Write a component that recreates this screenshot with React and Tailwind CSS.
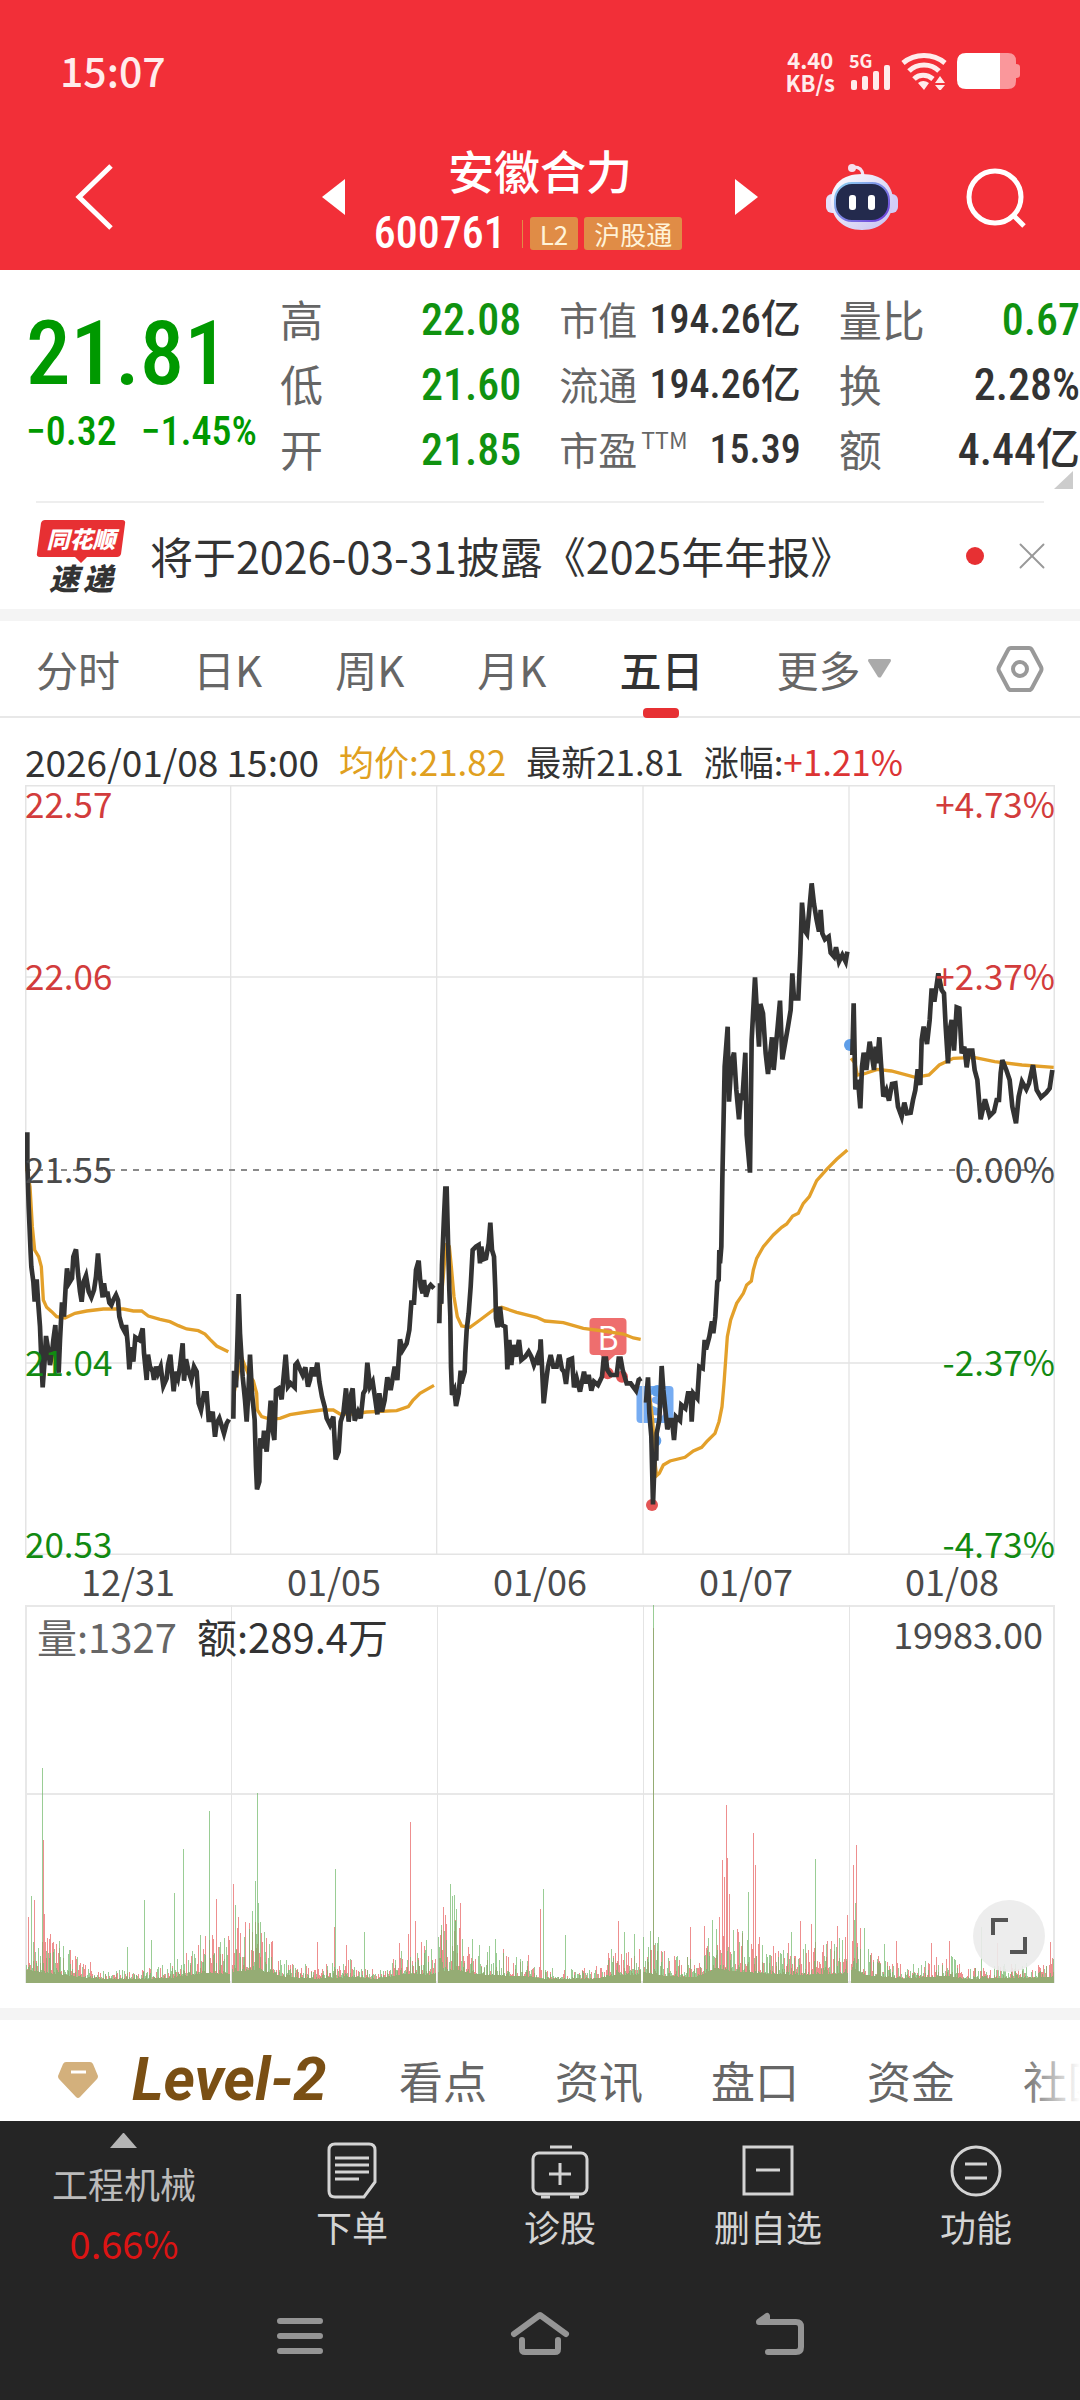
import { X } from "lucide-react"

const quotes = [
  { label: "高", value: "22.08", down: true },
  { label: "低", value: "21.60", down: true },
  { label: "开", value: "21.85", down: true },
  { label: "市值", value: "194.26亿", small: true },
  { label: "流通", value: "194.26亿", small: true },
  { label: "市盈", sup: "TTM", value: "15.39", small: true },
  { label: "量比", value: "0.67", down: true },
  { label: "换", value: "2.28%" },
  { label: "额", value: "4.44亿" },
]

const periods = ["分时", "日K", "周K", "月K", "五日"]

const leftScale = ["22.57", "22.06", "21.55", "21.04", "20.53"]
const rightScale = ["+4.73%", "+2.37%", "0.00%", "-2.37%", "-4.73%"]
const scaleTone = [
  "text-[#d23c3c]",
  "text-[#d23c3c]",
  "text-[#4a4a4a]",
  "text-[#128a12]",
  "text-[#128a12]",
]
const scalePlace = ["top-[-2px]", "top-[170px]", "top-[363px]", "top-[556px]", "bottom-[-8px]"]

const dates = ["12/31", "01/05", "01/06", "01/07", "01/08"]

// Each session holds two polylines, shifted by its own origin
const sessions = [
  {
    origin: "translate(-75 945)",
    price:
      "82,97 82,185 86,320 92,460 94,500 100,545 104,605 110,538 114,600 120,680 124,780 128,862 134,780 138,708 144,745 150,795 156,760 160,720 166,675 170,760 176,818 180,720 186,607 192,650 197,560 201,505 208,548 216,535 220,470 228,448 234,520 240,575 245,605 251,545 258,527 266,575 274,592 282,570 288,530 294,460 300,530 308,592 312,550 318,590 322,575 328,608 334,615 340,600 348,585 354,600 358,650 366,680 374,695 378,675 383,730 388,808 394,742 400,785 406,712 418,720 428,685 432,760 440,840 444,764 450,800 458,815 462,840 468,800 474,820 482,800 490,858 500,835 504,795 511,764 516,820 521,874 527,815 534,835 540,800 548,730 552,842 558,778 566,815 574,840 582,800 590,815 596,910 603,930 612,880 620,880 626,960 632,960 638,935 645,1010 650,970 658,955 666,980 672,1000 680,970 687,958",
    average:
      "75,185 82,215 90,260 97,380 104,450 116,470 124,500 130,600 140,622 155,635 170,650 195,654 225,640 260,633 310,627 370,627 400,633 425,633 445,648 480,658 510,665 535,677 560,687 595,692 615,702 630,718 650,738 685,755",
  },
  {
    origin: "translate(-75 945)",
    price:
      "700,956 702,812 708,862 713,700 716,582 720,700 728,830 735,900 740,965 745,880 750,764 756,880 764,960 768,1100 771,1168 778,1145 781,1015 788,1045 792,992 800,1055 806,980 812,902 818,990 823,1020 828,870 836,865 845,898 850,840 857,764 864,860 872,850 884,862 886,795 892,788 900,808 908,825 916,802 924,860 930,840 936,802 944,828 952,788 958,845 966,890 974,920 980,955 990,975 1000,950 1007,1078 1016,1055 1022,965 1030,940 1038,865 1046,965 1054,880 1058,865 1064,962 1074,935 1082,955 1090,880 1096,870 1102,788 1110,860 1118,845 1126,900 1132,943 1138,880 1146,935 1154,900 1162,832 1172,870 1184,800 1192,840 1200,718 1208,750 1220,730 1228,690 1234,608 1242,608 1248,510 1256,482 1262,560 1268,580 1272,540 1278,590 1286,562 1292,555 1302,565",
    average:
      "702,880 710,840 720,790 728,780 746,825 760,842 770,880 772,930 785,950 810,957 840,955 870,944 920,936 965,930 1000,930 1020,942 1060,942 1100,936 1190,932 1225,920 1238,902 1260,880 1302,856",
  },
  {
    origin: "translate(1185 945)",
    price:
      "58,670 60,550 64,612 66,495 72,350 76,266 80,266 84,420 88,570 91,650 93,800 96,885 103,870 108,918 116,880 122,812 124,850 134,815 136,760 140,690 146,640 152,560 158,450 168,440 176,435 180,490 184,440 190,478 198,475 206,430 211,368 216,450 222,470 226,570 228,655 233,682 240,620 246,675 256,680 260,750 262,808 268,720 274,795 280,735 288,770 297,720 304,780 316,770 326,755 334,770 342,795 352,770 358,795 362,718 366,800 371,910 380,830 384,800 392,765 400,800 410,800 418,764 426,808 432,815 438,852 446,780 456,776 462,862 470,835 480,875 492,815 498,850 506,825 514,872 522,845 534,855 546,830 551,776 558,776 562,810 572,825 590,825 596,776 602,776 608,810 620,850 632,850 648,872 656,840 664,835",
    average:
      "58,650 68,550 78,435 88,440 94,500 102,590 112,650 125,678 150,682 180,660 220,630 245,622 290,637 350,652 375,663 430,668 490,685 550,693 610,702 640,714 662,718",
  },
  {
    origin: "translate(1185 945)",
    price:
      "678,908 680,880 684,832 688,940 694,1010 699,1213 704,1075 709,1075 710,1000 718,960 722,870 725,798 730,870 736,930 742,988 750,960 756,960 762,1020 768,950 780,962 784,915 796,925 804,880 812,880 815,965 820,880 832,895 838,800 848,805 854,720 858,748 868,710 876,664 880,700 886,650 892,545 896,540 898,450 900,490 904,440 907,240 914,-100 923,-220 927,5 934,-110 942,-142 949,-30 957,58 963,-20 967,0 976,-142 980,105 990,218 995,-180 1005,-368 1011,-260 1017,-160 1021,-288 1029,-260 1037,-140 1044,-78 1056,-188 1061,-90 1073,-220 1080,-298 1087,-122 1097,-180 1104,-220 1112,-270 1117,-380 1122,-305 1135,-305 1141,-440 1146,-592 1153,-510 1161,-498 1167,-560 1175,-650 1182,-588 1190,-540 1197,-505 1202,-570 1207,-500 1215,-482 1226,-490 1232,-442 1242,-430 1248,-458 1257,-415 1267,-435 1277,-415 1282,-445",
    average:
      "688,880 698,960 704,1080 710,1127 718,1120 730,1095 750,1083 795,1072 820,1053 845,1042 860,1025 885,1000 897,965 906,920 912,850 917,780 922,710 932,660 950,610 970,580 980,555 994,543 1000,510 1010,475 1030,440 1060,405 1085,382 1100,372 1118,348 1135,340 1150,310 1168,290 1190,242 1220,208 1250,178 1282,150",
  },
  {
    origin: "translate(1185 945)",
    price:
      "1297,-135 1301,-290 1306,-32 1314,-60 1321,25 1326,-100 1331,-142 1339,-90 1349,-175 1356,-130 1362,-90 1367,-160 1371,-110 1378,-188 1383,-110 1390,-10 1399,-30 1407,2 1416,-48 1426,-50 1434,20 1445,50 1453,8 1461,40 1472,38 1479,0 1486,-30 1493,-92 1501,-45 1505,-180 1511,-220 1521,-168 1529,-240 1535,-335 1543,-295 1555,-380 1565,-330 1572,-320 1577,-220 1584,-110 1589,-210 1595,-240 1602,-148 1610,-278 1618,-275 1625,-140 1633,-160 1640,-98 1647,-148 1657,-148 1664,-90 1672,-60 1682,58 1695,-2 1709,48 1722,35 1730,0 1737,0 1742,-80 1747,-120 1759,-90 1769,-60 1777,20 1788,70 1796,-10 1806,-55 1819,-32 1827,-50 1839,-105 1850,-30 1863,-8 1879,-22 1889,-35 1897,-90",
    average:
      "1293,-125 1305,-110 1312,-75 1331,-78 1372,-92 1414,-87 1486,-68 1527,-75 1558,-105 1600,-125 1662,-128 1724,-115 1806,-105 1901,-98",
  },
]

const trades = [
  { x: 563, y: 820, side: "buy" },
  { x: 606, y: 830, side: "buy" },
  { x: 696, y: 1215, side: "buy" },
  { x: 712, y: 873, side: "sell" },
  { x: 706, y: 1022, side: "sell" },
  { x: 1290, y: -165, side: "sell" },
]

// [x, typical height] of the volume floor
const floor = [
  [0, 44], [17, 34], [50, 18], [80, 7], [115, 7], [150, 14], [180, 32], [204, 28],
  [208, 36], [230, 46], [260, 16], [290, 9], [330, 16], [350, 7], [380, 28], [408, 24],
  [412, 36], [430, 40], [460, 24], [500, 18], [520, 8], [570, 9], [590, 24], [612, 24],
  [618, 34], [640, 20], [670, 14], [690, 50], [710, 38], [730, 32], [770, 24], [822, 30],
  [828, 50], [840, 24], [880, 9], [920, 20], [940, 8], [1030, 15],
]

// [x, height, rising]
const spikes = [
  [3, 66, 1], [6, 87, 0], [9, 83, 1], [17, 215, 0], [18, 143, 1], [19, 69, 1], [27, 40, 1], [38, 37, 0],
  [102, 36, 0], [119, 83, 0], [126, 43, 0], [149, 90, 0], [158, 134, 0], [175, 48, 0], [184, 172, 0],
  [188, 44, 1], [191, 84, 1], [203, 47, 1], [208, 99, 1], [210, 78, 0], [213, 66, 1], [224, 60, 1],
  [227, 72, 0], [230, 102, 0], [232, 190, 0], [233, 80, 0], [237, 41, 1], [246, 41, 1], [292, 41, 1],
  [309, 56, 1], [310, 114, 0], [321, 38, 1], [339, 51, 0], [374, 40, 1], [383, 49, 1], [385, 161, 1],
  [390, 62, 1], [396, 41, 1], [401, 43, 0], [415, 48, 1], [418, 76, 1], [420, 68, 1], [425, 99, 0],
  [427, 87, 0], [429, 88, 0], [431, 74, 0], [435, 80, 1], [470, 44, 0], [515, 74, 1], [518, 94, 0],
  [540, 48, 0], [593, 62, 1], [599, 51, 0], [609, 49, 0], [625, 52, 0], [628, 378, 0], [628, 355, 1],
  [633, 46, 0], [665, 56, 1], [679, 57, 1], [694, 66, 1], [697, 123, 1], [699, 106, 1], [701, 178, 1],
  [702, 125, 1], [704, 89, 1], [708, 53, 0], [723, 91, 0], [728, 150, 1], [730, 118, 1], [766, 51, 0],
  [775, 62, 1], [786, 59, 1], [790, 124, 0], [812, 57, 1], [822, 68, 1], [828, 118, 1], [830, 80, 0],
  [831, 138, 1], [839, 55, 0], [859, 39, 0], [871, 42, 1], [906, 40, 1], [924, 42, 1], [956, 56, 0],
  [972, 40, 1], [1025, 41, 1],
]

// No trades are drawn between two sessions
const gaps = [205, 206, 411, 412, 616, 617, 823, 824, 825]

function buildVolume() {
  let seed = 11
  const next = () => {
    seed = (seed * 16807) % 2147483647
    return seed / 2147483647
  }
  const level = (x) => {
    const i = Math.max(1, floor.findIndex((p) => p[0] >= x))
    const [x0, h0] = floor[i - 1]
    const [x1, h1] = floor[i]
    return h0 + ((h1 - h0) * (x - x0)) / (x1 - x0)
  }
  let up = ""
  let down = ""
  for (let x = 1; x < 1029; x++) {
    if (gaps.includes(x)) continue
    const base = level(x)
    up += `M${x} 378v-${Math.round(2 + base * (0.25 + next() ** 3 * 1.3))}`
    down += `M${x} 378v-${Math.round(2 + base * (0.25 + next() ** 3 * 1.3))}`
  }
  spikes.forEach(([x, h, rising]) => {
    if (rising) up += `M${x} 378v-${h}`
    else down += `M${x} 378v-${h}`
  })
  return { up, down }
}

const volume = buildVolume()

function StatusBar() {
  return (
    <div className="flex h-[142px] items-center justify-between px-[60px] text-[#ffecec]">
      <span className="pb-1 text-[41px] leading-[46px] font-medium">15:07</span>
      <div className="flex items-center gap-[10px]">
        <div className="text-center text-[22px] leading-[23px] font-bold">
          <div>4.40</div>
          <div>KB/s</div>
        </div>
        <div className="relative ml-1 h-[38px] w-[42px]">
          <span className="absolute top-0 left-0 text-[18px] leading-[16px] font-bold">5G</span>
          <svg viewBox="0 0 42 38" className="h-full w-full" fill="currentColor">
            <rect x="2" y="28" width="6" height="10" rx="2" />
            <rect x="13" y="24" width="6" height="14" rx="2" />
            <rect x="24" y="19" width="6" height="19" rx="2" />
            <rect x="35" y="13" width="6" height="25" rx="2" />
          </svg>
        </div>
        <svg viewBox="0 0 46 38" className="h-[38px] w-[46px]" fill="none" stroke="currentColor" strokeWidth="5">
          <path d="M2 11C14 1 32 1 44 11M8 19c8-8 22-8 30 0M13 27c5-5 13-5 19 0" />
          <path d="M17 31q5-4 11 0l-5 7zM34 31l5-7 5 7zM34 33h10l-5 6z" fill="currentColor" stroke="none" />
        </svg>
        <svg viewBox="0 0 63 38" className="h-[38px] w-[63px]">
          <path d="M43 1h8q8 0 8 8v3q4 0 4 3v8q0 3-4 3v3q0 8-8 8h-8z" fill="#fa979b" />
          <path d="M43 1H9Q0 1 0 10v18q0 9 9 9h34z" fill="#fff" />
        </svg>
      </div>
    </div>
  )
}

function Robot() {
  return (
    <svg viewBox="0 0 72 68" className="h-[68px] w-[72px]">
      <defs>
        <linearGradient id="shell" x1="0" y1="0" x2="1" y2="1">
          <stop offset="0" stopColor="#fff" />
          <stop offset="1" stopColor="#c5bff0" />
        </linearGradient>
        <linearGradient id="rim" x1="0" y1="0" x2="1" y2="1">
          <stop offset="0" stopColor="#8fd6f2" />
          <stop offset="1" stopColor="#6a35d8" />
        </linearGradient>
      </defs>
      <path d="M26 4q10-1 11 8" fill="none" stroke="#f3e4f4" strokeWidth="3" />
      <circle cx="26" cy="5" r="4" fill="#f6dfee" />
      <rect x="0" y="31" width="14" height="19" rx="6" fill="#e4e0fa" />
      <rect x="58" y="31" width="14" height="19" rx="6" fill="#d2cdf6" />
      <path d="M36 11c20 0 31 11 31 27S56 67 36 67 5 54 5 38s11-27 31-27z" fill="url(#shell)" />
      <rect x="9" y="20" width="54" height="38" rx="17" fill="#232a4d" stroke="url(#rim)" strokeWidth="2" />
      <rect x="23" y="32" width="7" height="15" rx="3" fill="#fff" />
      <rect x="42" y="32" width="7" height="15" rx="3" fill="#fff" />
    </svg>
  )
}

function Header() {
  return (
    <header className="bg-[#f22f38] text-white">
      <StatusBar />
      <div className="grid h-32 grid-cols-[1fr_436px_1fr] items-center pb-[18px]">
        <button aria-label="返回" className="h-full pl-[60px]">
          <svg viewBox="0 0 70 66" className="h-[66px] w-[70px]" fill="none" stroke="currentColor" strokeWidth="5">
            <path d="M51 2L19 33L51 64" />
          </svg>
        </button>
        <div className="flex h-full items-center justify-between">
          <button aria-label="上一只">
            <svg viewBox="0 0 23 36" className="h-9 w-[23px]" fill="currentColor">
              <path d="M23 0v36L0 18z" />
            </svg>
          </button>
          <div className="flex h-full flex-col items-center gap-[21px]">
            <h1 className="text-[46px] leading-[54px] font-medium">安徽合力</h1>
            <div className="flex items-center pr-6 text-[26px] leading-[33px]">
              <span className="font-['Roboto_Condensed','Roboto',sans-serif] text-[44px] font-medium">600761</span>
              <span className="mr-[7px] ml-4 h-7 w-px bg-[#e08c46]" />
              <span className="rounded-[3px] bg-[#e08c46] px-[10px] text-[#fff3d8]">L2</span>
              <span className="ml-[6px] rounded-[3px] bg-[#e08c46] px-[10px] text-[#fff3d8]">沪股通</span>
            </div>
          </div>
          <button aria-label="下一只">
            <svg viewBox="0 0 23 36" className="h-9 w-[23px]" fill="currentColor">
              <path d="M0 0v36L23 18z" />
            </svg>
          </button>
        </div>
        <div className="flex h-full items-center justify-end gap-[67px] pr-[53px]">
          <button aria-label="智能助手">
            <Robot />
          </button>
          <button aria-label="搜索">
            <svg viewBox="0 0 62 62" className="h-[62px] w-[62px]" fill="none" stroke="currentColor" strokeWidth="5">
              <circle cx="30" cy="31" r="26" />
              <path d="M48 49l11 11" />
            </svg>
          </button>
        </div>
      </div>
    </header>
  )
}

function Quote() {
  return (
    <section className="relative flex pt-4 pb-5 pl-[26px]">
      <div className="w-[254px] shrink-0 font-['Roboto_Condensed','Roboto',sans-serif] text-[#009900]">
        <div className="mt-[22px] text-[89px] leading-[92px] font-medium">21.81</div>
        <div className="mt-[10px] flex gap-6 text-[40px] leading-[44px] font-medium">
          <span>−0.32</span>
          <span>−1.45%</span>
        </div>
      </div>
      <dl className="grid flex-1 grid-flow-col grid-cols-3 grid-rows-3 gap-x-[38px]">
        {quotes.map(({ label, sup, value, small, down }) => (
          <div key={label} className="flex h-[65px] items-center justify-between whitespace-nowrap">
            <dt className={small ? "flex text-[39px] text-[#666]" : "flex text-[43px] text-[#666]"}>
              {label}
              {sup && <span className="mt-1 ml-1 text-[23px] leading-[32px]">{sup}</span>}
            </dt>
            <dd
              className={`pt-[2px] font-['Roboto_Condensed','Roboto','Noto_Sans_CJK_SC',sans-serif] font-medium ${
                small ? "text-[40px]" : "text-[44px]"
              } ${down ? "text-[#109210]" : "text-[#333]"}`}
            >
              {value}
            </dd>
          </div>
        ))}
      </dl>
      <span className="absolute right-[7px] bottom-3 h-[18px] w-[19px] bg-[#ccc] [clip-path:polygon(100%_0,100%_100%,0_100%)]" />
    </section>
  )
}

function News() {
  return (
    <section className="mx-9 flex h-[108px] items-center border-t-2 border-[#eee]">
      <div className="relative h-[72px] w-[90px] text-center italic">
        <svg viewBox="0 0 90 44" className="absolute top-0 left-0 h-11 w-[90px]" fill="#e73033">
          <path d="M9 0h77q4 0 3 4l-4 30q-1 3-4 3H51l-6 6-6-6H4q-4 0-3-4L5 3q1-3 4-3z" />
        </svg>
        <div className="relative text-[23px] leading-[37px] font-black text-white">同花顺</div>
        <div className="relative flex justify-center gap-1 pt-[7px] text-[30px] leading-[27px] font-black text-[#333]">
          <span>速</span>
          <span>递</span>
        </div>
      </div>
      <a href="#report" className="ml-6 flex-1 pb-[2px] text-[43px] leading-[60px] whitespace-nowrap text-[#333]">
        将于2026-03-31披露《2025年年报》
      </a>
      <span className="mr-[25px] h-[18px] w-[18px] rounded-full bg-[#e73033]" />
      <button aria-label="关闭" className="-mr-[11px] text-[#999]">
        <X size={46} strokeWidth={1} />
      </button>
    </section>
  )
}

function Periods() {
  return (
    <nav className="flex h-[97px] items-center border-b-2 border-[#e8e8e8] px-9 text-[42px] leading-[60px] text-[#666]">
      <div className="flex h-full flex-1 gap-[73px]">
        {periods.map((name) => (
          <button
            key={name}
            className={
              name === "五日"
                ? "relative h-full font-medium text-[#333] after:absolute after:-bottom-[2px] after:left-1/2 after:h-[10px] after:w-9 after:-translate-x-1/2 after:rounded after:bg-[#e73033]"
                : "h-full"
            }
          >
            {name}
          </button>
        ))}
        <button className="flex h-full items-center gap-2">
          更多
          <svg viewBox="0 0 23 19" className="h-[19px] w-[23px]" fill="#aaa">
            <path d="M1 0h21q1 0 1 2L13 18q-1 1-3 0L0 2q0-2 1-2z" />
          </svg>
        </button>
      </div>
      <button aria-label="设置">
        <svg viewBox="0 0 48 46" className="h-[46px] w-12" fill="none" stroke="#999" strokeWidth="4">
          <path d="M15 2h18q2 0 3 2l9 17q1 2 0 4l-9 17q-1 2-3 2H15q-2 0-3-2L3 25q-1-2 0-4l9-17q1-2 3-2z" />
          <circle cx="24" cy="23" r="7" />
        </svg>
      </button>
    </nav>
  )
}

function PriceChart() {
  return (
    <div className="relative h-[770px]">
      <span className="absolute top-[533px] left-[56.6%] h-[37px] w-[37px] -translate-x-1/2 rounded bg-[#ee6e6e] text-center text-[32px] leading-[37px] text-white">
        B
      </span>
      <span className="absolute top-[601px] left-[61.2%] h-[37px] w-[37px] -translate-x-1/2 rounded bg-[#76acf2] text-center text-[32px] leading-[37px] text-white">
        S
      </span>
      <svg viewBox="0 0 3090 2310" preserveAspectRatio="none" className="absolute inset-0 h-full w-full" fill="none">
        <g stroke="#e4e4e4" strokeWidth="5">
          <path d="M2 2H3088V2308H2zM0 576H3090M0 1734H3090" />
          <path d="M617 0V2310M1235 0V2310M1854 0V2310M2472 0V2310" strokeWidth="4" />
        </g>
        <path d="M0 1155H3090" stroke="#8a8a8a" strokeWidth="6" strokeDasharray="18 18" />
        <path d="M1723 1708h50l-25 22z" fill="#ee6e6e" />
        <g transform="translate(1185 945)">
          {trades.map(({ x, y, side }) => (
            <circle key={x} cx={x} cy={y} r="18" fill={side === "buy" ? "#e35555" : "#5f9ee8"} />
          ))}
        </g>
        {sessions.map(({ origin, price, average }) => (
          <g key={price} transform={origin}>
            <polyline points={average} stroke="#e3a02a" strokeWidth="10" />
            <polyline points={price} stroke="#333" strokeWidth="14" />
          </g>
        ))}
      </svg>
      <div className="absolute inset-0 text-[35px] leading-10">
        {leftScale.map((value, i) => (
          <div key={value} className={`absolute inset-x-0 flex justify-between ${scaleTone[i]} ${scalePlace[i]}`}>
            <span>{value}</span>
            <span>{rightScale[i]}</span>
          </div>
        ))}
      </div>
    </div>
  )
}

function VolumeChart() {
  return (
    <div className="relative h-[378px]">
      <svg
        viewBox="0 0 1030 378"
        preserveAspectRatio="none"
        className="absolute inset-0 h-full w-full"
        fill="none"
        shapeRendering="crispEdges"
      >
        <path d="M1 1H1029V377H1zM0 189H1030" stroke="#e8e8e8" strokeWidth="2" />
        <path d="M206 0V378M412 0V378M618 0V378M824 0V378" stroke="#e4e4e4" />
        <path d={volume.up} stroke="#ee8f8f" />
        <path d={volume.down} stroke="#6fb868" strokeOpacity="0.7" />
      </svg>
      <div className="relative flex items-start justify-between px-3 pt-[6px] text-[40px] leading-[50px] text-[#333]">
        <div className="flex gap-5">
          <span className="text-[#666]">量:1327</span>
          <span>额:289.4万</span>
        </div>
        <span className="text-[36px] leading-[44px] text-[#4a4a4a]">19983.00</span>
      </div>
      <button
        aria-label="全屏"
        className="absolute right-[10px] bottom-[11px] flex h-[72px] w-[72px] items-center justify-center rounded-full bg-[#ebebeb]/90"
      >
        <svg viewBox="0 0 38 38" className="h-[38px] w-[38px]" fill="none" stroke="#555" strokeWidth="4">
          <path d="M3 18V3h15M35 20v15H20" />
        </svg>
      </button>
    </div>
  )
}

function Charts() {
  return (
    <section className="px-[25px] pb-[25px]">
      <div className="flex h-[67px] items-center gap-5 pt-[18px] text-[35px] leading-[46px] whitespace-nowrap text-[#333]">
        <span className="text-[37px]">2026/01/08 15:00</span>
        <span className="text-[#e0a020]">均价:21.82</span>
        <span>最新21.81</span>
        <span>
          涨幅:<span className="text-[#dc3434]">+1.21%</span>
        </span>
      </div>
      <PriceChart />
      <div className="grid h-[50px] grid-cols-5 items-center text-center text-[36px] leading-[50px] text-[#4a4a4a]">
        {dates.map((date) => (
          <span key={date}>{date}</span>
        ))}
      </div>
      <VolumeChart />
    </section>
  )
}

function InfoTabs() {
  return (
    <nav className="relative flex h-[101px] items-center gap-[68px] overflow-hidden pt-[18px] pl-[58px] text-[44px] leading-[60px] whitespace-nowrap text-[#666]">
      <button className="flex items-center gap-[34px]">
        <svg viewBox="0 0 40 36" className="h-9 w-10">
          <path d="M8 0h24q2 0 3 2l5 12q0 2-1 3L22 35q-2 2-4 0L1 17q-1-1-1-3L5 2q1-2 3-2z" fill="#d3b07c" />
          <path d="M13 10h15" stroke="#fff" strokeWidth="3" />
        </svg>
        <span className="w-[199px] text-left font-['Roboto',sans-serif] text-[60px] font-bold text-[#7a4f14] italic">
          Level-2
        </span>
      </button>
      {["看点", "资讯", "盘口", "资金", "社区"].map((name) => (
        <button key={name} className="shrink-0">
          {name}
        </button>
      ))}
      <span className="absolute inset-y-0 right-0 w-[60px] bg-gradient-to-r from-white/0 to-white" />
    </nav>
  )
}

const actions = [
  {
    name: "下单",
    icon: (
      <>
        <path d="M12 3h34q6 0 6 6v32L41 56H12q-6 0-6-6V9q0-6 6-6z" />
        <path d="M12 17h34M12 24h34M12 31h34M12 38h24" />
      </>
    ),
  },
  {
    name: "诊股",
    icon: (
      <>
        <rect x="2" y="12" width="54" height="41" rx="6" />
        <path d="M19 6h22M29 22v22M18 33h22M10 56h9M39 56h9" />
      </>
    ),
  },
  {
    name: "删自选",
    icon: (
      <>
        <rect x="5" y="6" width="48" height="47" />
        <path d="M17 29h24" />
      </>
    ),
  },
  {
    name: "功能",
    icon: (
      <>
        <circle cx="29" cy="30" r="24" />
        <path d="M18 23h22M18 37h22" />
      </>
    ),
  },
]

function BottomBar() {
  return (
    <footer className="bg-[#252525] text-[36px] leading-[50px] text-[#d4d4d4]">
      <div className="grid h-[168px] grid-cols-[248px_1fr_1fr_1fr_1fr] justify-items-center">
        <button className="flex flex-col items-center pt-3 text-[#bbb]">
          <svg viewBox="0 0 27 15" className="h-[15px] w-[27px]" fill="#b5b5b5">
            <path d="M0 15L13 0h1L27 15z" />
          </svg>
          <span className="mt-[10px]">工程机械</span>
          <span className="mt-[10px] text-[38px] text-[#dc1414]">0.66%</span>
        </button>
        {actions.map(({ name, icon }) => (
          <button key={name} className="flex flex-col items-center pt-5">
            <svg viewBox="0 0 58 60" className="h-[60px] w-[58px]" fill="none" stroke="currentColor" strokeWidth="3">
              {icon}
            </svg>
            <span>{name}</span>
          </button>
        ))}
      </div>
      <div className="grid h-[111px] grid-cols-3 items-start justify-items-center px-[180px] pt-[22px] text-[#959595]">
        <button aria-label="任务">
          <svg viewBox="0 0 60 46" className="h-[46px] w-[60px]" stroke="currentColor" strokeWidth="6" strokeLinecap="round">
            <path d="M10 10h40M10 25h40M10 40h40" />
          </svg>
        </button>
        <button aria-label="主页">
          <svg viewBox="0 0 60 46" className="h-[46px] w-[60px]" fill="none" stroke="currentColor" strokeWidth="6" strokeLinecap="round" strokeLinejoin="round">
            <path d="M4 23L30 4L56 23" />
            <path d="M12 29v9q0 3 3 3h30q3 0 3-3v-9" />
          </svg>
        </button>
        <button aria-label="后退">
          <svg viewBox="0 0 60 46" className="h-[46px] w-[60px]" fill="none" stroke="currentColor" strokeWidth="6" strokeLinecap="round" strokeLinejoin="round">
            <path d="M9 11H46q5 0 5 5v20q0 5-5 5H18" />
            <path d="M17 5v5h-7z" fill="currentColor" />
          </svg>
        </button>
      </div>
    </footer>
  )
}

export default function App() {
  return (
    <div className="bg-white font-['Noto_Sans_CJK_SC',sans-serif]">
      <Header />
      <main>
        <Quote />
        <News />
        <div className="h-3 bg-[#f4f4f4]" />
        <Periods />
        <Charts />
        <div className="h-3 bg-[#f4f4f4]" />
        <InfoTabs />
      </main>
      <BottomBar />
    </div>
  )
}
